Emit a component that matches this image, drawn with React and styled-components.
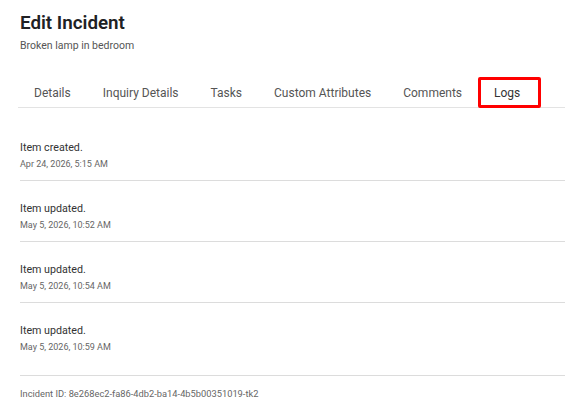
import styled, { createGlobalStyle } from "styled-components";

const GlobalStyle = createGlobalStyle`
  body {
    margin: 0;
    background: #fff;
    font-family: Roboto, "Open Sans", Arial, sans-serif;
    color: #222;
  }
`;

const tabs = [
  "Details",
  "Inquiry Details",
  "Tasks",
  "Custom Attributes",
  "Comments",
  "Logs",
];

const logs = [
  { message: "Item created.", time: "Apr 24, 2026, 5:15 AM" },
  { message: "Item updated.", time: "May 5, 2026, 10:52 AM" },
  { message: "Item updated.", time: "May 5, 2026, 10:54 AM" },
  { message: "Item updated.", time: "May 5, 2026, 10:59 AM" },
];

const App = () => {
  return (
    <Page>
      <GlobalStyle />
      <Header>
        <Title>Edit Incident</Title>
        <Subtitle>Broken lamp in bedroom</Subtitle>
      </Header>
      <TabBar>
        {tabs.map((tab) => (
          <Tab key={tab} $active={tab === "Logs"}>
            {tab}
          </Tab>
        ))}
      </TabBar>
      <LogList>
        {logs.map((log, i) => (
          <LogRow key={i}>
            <LogMessage>{log.message}</LogMessage>
            <LogTime>{log.time}</LogTime>
          </LogRow>
        ))}
      </LogList>
      <Footer>Incident ID: 8e268ec2-fa86-4db2-ba14-4b5b00351019-tk2</Footer>
    </Page>
  );
};

const Page = styled.div`
  padding: 13px 0 0 20px;
`;

const Header = styled.div`
  display: flex;
  flex-direction: column;
  gap: 6px;
`;

const Title = styled.h1`
  margin: 0;
  font-size: 18.8px;
  line-height: 20px;
  font-weight: 600;
  color: #202124;
`;

const Subtitle = styled.p`
  margin: 0;
  font-size: 10.5px;
  line-height: 14px;
  color: #555;
`;

const TabBar = styled.div`
  display: flex;
  margin-top: 24px;
  margin-left: -2px;
  border-bottom: 1px solid #e3e3e3;
`;

const Tab = styled.div`
  box-sizing: border-box;
  height: 31px;
  padding: ${(p) => (p.$active ? "0 18px 0 13px" : "0 16px")};
  display: flex;
  align-items: center;
  font-size: 12px;
  color: ${(p) => (p.$active ? "#333" : "#555")};
  border: ${(p) => (p.$active ? "3px solid #f00" : "none")};
  border-radius: 2px;
  margin-bottom: -1px;
`;

const LogList = styled.div`
  padding-top: 12px;
`;

const LogRow = styled.div`
  display: flex;
  flex-direction: column;
  gap: 1px;
  padding: 20px 0 9px;
  border-bottom: 1px solid #dcdcdc;

  &:last-child {
    border-bottom: none;
    padding-bottom: 21px;
  }
`;

const LogMessage = styled.div`
  font-size: 10.7px;
  line-height: 16px;
  color: #333;
`;

const LogTime = styled.div`
  font-size: 9px;
  line-height: 14px;
  color: #666;
`;

const Footer = styled.div`
  padding-top: 11px;
  font-size: 9.3px;
  line-height: 14px;
  color: #666;
  border-top: 1px solid #dcdcdc;
`;

export default App;
